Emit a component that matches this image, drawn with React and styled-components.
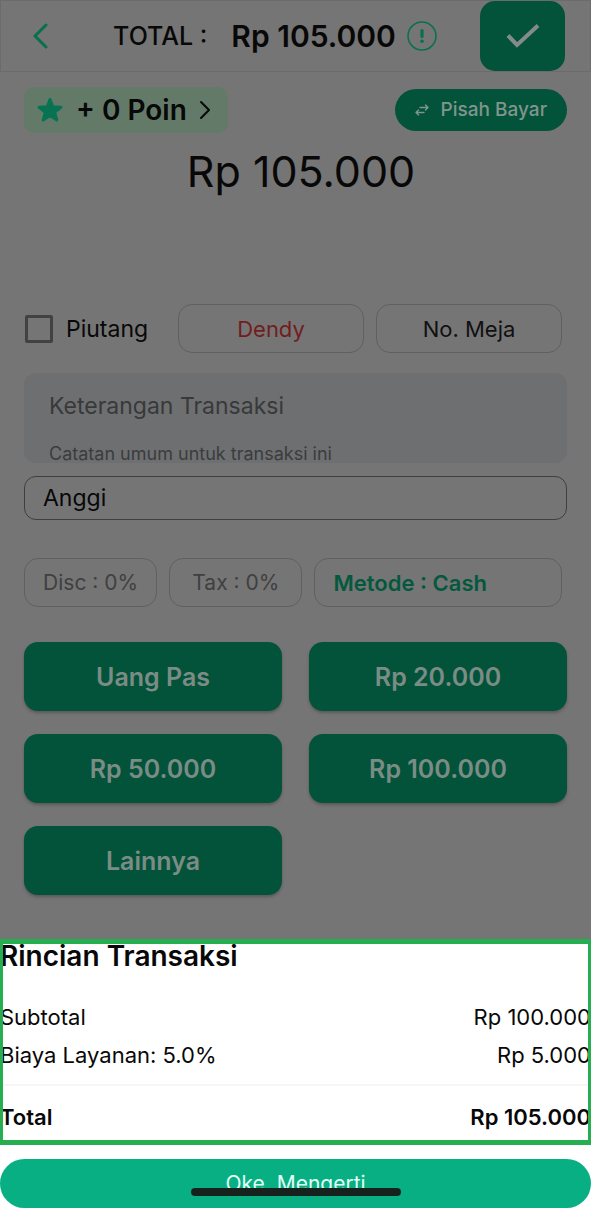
import React from "react";
import styled, { createGlobalStyle } from "styled-components";

const GlobalStyle = createGlobalStyle`
  *, *::before, *::after { box-sizing: border-box; }
  body { margin: 0; background: #757575; }
  button, input, textarea { font: inherit; color: inherit; }
  button { cursor: pointer; }
`;

const Page = styled.div`
  font-family: Inter, "Open Sans", sans-serif;
  font-size: 22px;
  line-height: 28px;
  color: #080808;
  background: #757575;
`;

const Header = styled.header`
  display: flex;
  align-items: center;
  height: 72px;
  padding: 0 25px 0 23px;
  border: 1px solid #6b6b6b;
`;

const IconButton = styled.button`
  display: flex;
  justify-content: center;
  width: 34px;
  padding: 0;
  border: 0;
  background: none;
  color: #07704f;
`;

const Total = styled.div`
  flex: 1;
  display: flex;
  align-items: center;
  justify-content: center;
  padding-left: 14px;
  white-space: nowrap;
`;

const TotalLabel = styled.span`
  font-size: 25px;
  font-weight: 500;
  margin-right: 24px;
`;

const TotalValue = styled.strong`
  font-size: 30px;
  font-weight: 600;
  margin-right: 9px;
`;

const ConfirmButton = styled.button`
  display: grid;
  place-items: center;
  width: 85px;
  height: 70px;
  padding: 0;
  border: 0;
  border-radius: 15px;
  background: #03533b;
  color: #858b88;
`;

const Main = styled.main`
  padding: 15px 24px 44px;
`;

const Row = styled.div`
  display: flex;
  align-items: center;
  justify-content: ${(p) => (p.$spread ? "space-between" : "flex-start")};
  gap: 12px;
  padding-right: ${(p) => (p.$inset ? "5px" : "0")};
`;

const PointsButton = styled.button`
  display: flex;
  align-items: center;
  gap: 12px;
  height: 46px;
  padding: 0 17px 0 12px;
  border: 0;
  border-radius: 10px;
  background: #647a68;
  font-size: 28px;
  font-weight: 600;
  white-space: nowrap;
`;

const SplitButton = styled.button`
  display: flex;
  align-items: center;
  gap: 12px;
  height: 42px;
  padding: 0 20px;
  border: 0;
  border-radius: 21px;
  background: #03533b;
  color: #80958c;
  font-size: 19px;
  font-weight: 500;
  white-space: nowrap;
`;

const Amount = styled.div`
  height: 76px;
  margin-bottom: 95px;
  padding-left: 11px;
  font-size: 43px;
  line-height: 76px;
  text-align: center;
`;

const CheckLabel = styled.label`
  display: flex;
  align-items: center;
  gap: 13px;
  width: 142px;
  padding-left: 1px;
  flex: none;
  font-size: 23px;
`;

const Checkbox = styled.input`
  appearance: none;
  width: 28px;
  height: 28px;
  margin: 0;
  border: 3px solid #424242;
  border-radius: 2px;
`;

const OutlineButton = styled.button`
  flex: ${(p) => p.$grow || 1} 1 0;
  height: 49px;
  padding: 0 18px;
  border: 1px solid #606060;
  border-radius: 14px;
  background: none;
  color: ${(p) => p.$color || "#111"};
  font-size: ${(p) => (p.$compact ? "21px" : "22px")};
  font-weight: ${(p) => (p.$strong ? 600 : 400)};
  text-align: ${(p) => (p.$strong ? "left" : "center")};
  white-space: nowrap;
`;

const Note = styled.label`
  display: block;
  height: 90px;
  margin: 20px 0 13px;
  padding: 19px 25px 0;
  border-radius: 12px;
  background: #6e6f71;
  color: #3b3c3d;
  overflow: hidden;
`;

const NoteInput = styled.textarea`
  display: block;
  width: 100%;
  height: 28px;
  margin-bottom: 22px;
  padding: 0;
  border: 0;
  outline: 0;
  background: none;
  resize: none;
  overflow: hidden;
  font-size: 23px;
  &::placeholder { color: #38393a; opacity: 1; }
`;

const NoteHint = styled.span`
  display: block;
  font-size: 18px;
  line-height: 24px;
`;

const NameInput = styled.input`
  display: block;
  width: 100%;
  height: 44px;
  margin-bottom: 38px;
  padding: 0 18px;
  border: 1px solid #3f3f3f;
  border-radius: 12px;
  background: none;
  font-size: 23px;
`;

const PayGrid = styled.div`
  display: grid;
  grid-template-columns: 1fr 1fr;
  gap: 23px 27px;
  margin-top: 35px;
`;

const PayButton = styled.button`
  height: 69px;
  border: 0;
  border-radius: 14px;
  background: #03533b;
  box-shadow: 0 2px 3px #5a5a5a;
  color: #7b8c85;
  font-size: 25px;
  font-weight: 600;
`;

const Sheet = styled.section`
  background: #fff;
`;

const Details = styled.div`
  position: relative;
  height: 206px;
  margin-bottom: 14px;
  &::after {
    content: "";
    position: absolute;
    inset: 0;
    border: 5px solid #27ae50;
    border-width: 5px 3px;
    pointer-events: none;
  }
`;

const SheetTitle = styled.h2`
  margin: 0 0 25px;
  font-size: 28px;
  line-height: 34px;
  font-weight: 600;
`;

const Lines = styled.dl`
  margin: 0;
`;

const Line = styled.div`
  display: flex;
  justify-content: space-between;
  line-height: 38px;
  font-weight: ${(p) => (p.$total ? 600 : 400)};
  margin-top: ${(p) => (p.$total ? "10px" : "0")};
  padding-top: ${(p) => (p.$total ? "12px" : "0")};
  border-top: ${(p) => (p.$total ? "2px solid #f6f6f6" : "0")};
  dd { margin: 0; }
`;

const AcceptButton = styled.button`
  position: relative;
  display: block;
  width: 100%;
  height: 49px;
  padding: 0;
  border: 0;
  border-radius: 25px;
  background: #07af83;
  color: #e2fff5;
  font-size: 21px;
  line-height: 49px;
  &::after {
    content: "";
    position: absolute;
    left: calc(50% - 105px);
    bottom: 12px;
    width: 210px;
    height: 8px;
    border-radius: 4px;
    background: #15221e;
  }
`;

const Stroke = ({ w, h, d, width = 3, cap = "round" }) => (
  <svg width={w} height={h} viewBox={`0 0 ${w} ${h}`} fill="none" stroke="currentColor"
    strokeWidth={width} strokeLinecap={cap} strokeLinejoin={cap === "round" ? "round" : "miter"} aria-hidden="true">
    <path d={d} />
  </svg>
);

const Star = () => (
  <svg width="28" height="28" viewBox="0 0 28 28" fill="#077353" stroke="#077353"
    strokeWidth="3" strokeLinejoin="round" aria-hidden="true">
    <path d="M14 3.5 L16.8 10.8 L25 11.2 L18.6 16.2 L20.8 24 L14 19.6 L7.2 24 L9.4 16.2 L3 11.2 L11.2 10.8 Z" />
  </svg>
);

const payments = ["Uang Pas", "Rp 20.000", "Rp 50.000", "Rp 100.000", "Lainnya"];

export default function App() {
  return (
    <Page>
      <GlobalStyle />
      <Header>
        <IconButton aria-label="Kembali">
          <Stroke w={18} h={26} d="M14 2 L3 13 L14 24" />
        </IconButton>
        <Total>
          <TotalLabel>TOTAL :</TotalLabel>
          <TotalValue>Rp 105.000</TotalValue>
          <IconButton aria-label="Rincian">
            <svg width="30" height="30" viewBox="0 0 30 30" fill="none" aria-hidden="true">
              <circle cx="15" cy="15" r="14" stroke="currentColor" strokeWidth="1.5" />
              <path d="M15 9.5 V15.5" stroke="currentColor" strokeWidth="3.2" strokeLinecap="round" />
              <circle cx="15" cy="20.3" r="1.8" fill="currentColor" />
            </svg>
          </IconButton>
        </Total>
        <ConfirmButton aria-label="Bayar">
          <Stroke w={34} h={26} d="M2 12.5 L11 22 L32 2.5" width={4} cap="butt" />
        </ConfirmButton>
      </Header>

      <Main>
        <Row $spread>
          <PointsButton>
            <Star />
            <span>+ 0 Poin</span>
            <Stroke w={12} h={20} d="M2 2 L10 10 L2 18" width={2} />
          </PointsButton>
          <SplitButton>
            <Stroke w={14} h={12} d="M5 3.5 H13 M10.5 1 L13 3.5 L10.5 6 M9 8.5 H1 M3.5 6 L1 8.5 L3.5 11" width={1.4} />
            Pisah Bayar
          </SplitButton>
        </Row>

        <Amount>Rp 105.000</Amount>

        <Row $inset>
          <CheckLabel>
            <Checkbox type="checkbox" />
            Piutang
          </CheckLabel>
          <OutlineButton $color="#711d20">Dendy</OutlineButton>
          <OutlineButton>No. Meja</OutlineButton>
        </Row>

        <Note>
          <NoteInput rows={1} placeholder="Keterangan Transaksi" />
          <NoteHint>Catatan umum untuk transaksi ini</NoteHint>
        </Note>
        <NameInput aria-label="Nama kasir" defaultValue="Anggi" />

        <Row $inset>
          <OutlineButton $grow={10} $color="#404040" $compact>Disc : 0%</OutlineButton>
          <OutlineButton $grow={10} $color="#404040" $compact>Tax : 0%</OutlineButton>
          <OutlineButton $grow={22} $color="#04583e" $strong>Metode : Cash</OutlineButton>
        </Row>

        <PayGrid>
          {payments.map((p) => <PayButton key={p}>{p}</PayButton>)}
        </PayGrid>
      </Main>

      <Sheet>
        <Details>
          <SheetTitle>Rincian Transaksi</SheetTitle>
          <Lines>
            <Line><dt>Subtotal</dt><dd>Rp 100.000</dd></Line>
            <Line><dt>Biaya Layanan: 5.0%</dt><dd>Rp 5.000</dd></Line>
            <Line $total><dt>Total</dt><dd>Rp 105.000</dd></Line>
          </Lines>
        </Details>
        <AcceptButton>Oke, Mengerti</AcceptButton>
      </Sheet>
    </Page>
  );
}
